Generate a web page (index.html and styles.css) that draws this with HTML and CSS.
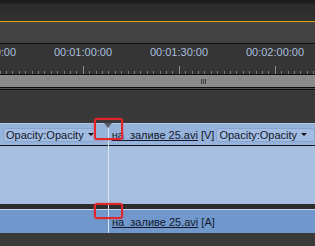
FILE: index.html
```html
<!DOCTYPE html>
<html lang="en">
<head>
    <meta charset="UTF-8">
    <title>Timeline</title>
    <link rel="stylesheet" href="styles.css">
</head>
<body>
    <div class="window">
        <div class="titlebar"></div>
        <div class="work-line"></div>
        <div class="work-area"></div>
        <div class="sep"></div>
        <div class="ruler">
            <div class="mark"><span>00:00:30:00</span><div class="ticks"></div></div>
            <div class="mark"><span>00:01:00:00</span><div class="ticks"></div></div>
            <div class="mark"><span>00:01:30:00</span><div class="ticks"></div></div>
            <div class="mark"><span>00:02:00:00</span><div class="ticks"></div></div>
        </div>
        <div class="sep"></div>
        <div class="zoombar"><div class="grip"><i></i><i></i><i></i></div></div>
        <div class="sep"></div>
        <div class="sep grey"></div>
        <div class="sep"></div>
        <div class="empty"></div>

        <div class="tracks">
            <div class="video-head">
                <div class="fx-box fx-left">Opacity:Opacity <b class="arrow"></b></div>
                <div class="clip-name"><u>на_заливе 25.avi</u> [V]</div>
                <div class="fx-box fx-right">Opacity:Opacity <b class="arrow"></b></div>
            </div>
            <div class="sep"></div>
            <div class="video-body"></div>
            <div class="track-gap"></div>
            <div class="audio">
                <div class="clip-name"><u>на_заливе 25.avi</u> [A]</div>
            </div>

            <div class="playhead"></div>
            <div class="head-mark"></div>
            <div class="highlight hl-video"></div>
            <div class="highlight hl-audio"></div>
        </div>
        <div class="bottom"></div>
    </div>
</body>
</html>
```

FILE: styles.css
```css
body {
    margin: 0;
    background: #3a3a3a;
    font-family: "Liberation Sans", Arial, sans-serif;
    font-size: 11px;
}

.window {
    width: 315px;
    height: 246px;
    overflow: hidden;
    position: relative;
}

.titlebar {
    height: 21px;
    background: linear-gradient(#1d1d1d 0, #1d1d1d 3px, #2b2b2b 4px, #323232 100%);
}

.work-line {
    height: 1px;
    background: #e4a10e;
}

.work-area {
    height: 21px;
    background: #434343;
}

.sep {
    height: 1px;
    background: #0e0e0e;
}

.sep.grey {
    background: #555;
}

.ruler {
    height: 30px;
    background: #353535;
    display: flex;
    margin-left: -61px;
}

.mark {
    width: 96px;
    flex: none;
    display: flex;
    flex-direction: column;
    align-items: center;
}

.mark span {
    height: 20px;
    padding-top: 2px;
    line-height: 13px;
    color: #a9bfdc;
}

.ticks {
    width: 96px;
    height: 8px;
    position: relative;
    background: repeating-linear-gradient(to right, #7c7c7c 0, #7c7c7c 1px, transparent 1px, transparent 6.4px);
    background-size: 96px 3px;
    background-position: 3.2px 100%;
    background-repeat: no-repeat;
}

.ticks::after {
    content: "";
    position: absolute;
    left: 48px;
    bottom: 0;
    width: 1px;
    height: 8px;
    background: #8a8a8a;
}

.zoombar {
    height: 12px;
    background: #8b8b8b;
    display: flex;
    align-items: center;
    padding-left: 201px;
}

.grip {
    display: flex;
    gap: 1px;
}

.grip i {
    width: 1px;
    height: 5px;
    background: #3c3c3c;
}

.empty {
    height: 33px;
    background: #393939;
}

.tracks {
    position: relative;
}

.video-head {
    height: 22px;
    background: #96b3dc;
    border-top: 1px solid #b5c8e6;
    box-sizing: border-box;
    display: flex;
    align-items: center;
    color: #14182a;
}

.fx-box {
    height: 14px;
    line-height: 14px;
    box-sizing: border-box;
    background: #a3bce2;
    border: 1px solid #88a5d0;
    border-radius: 2px;
    padding: 0 0 0 2px;
    display: flex;
    align-items: center;
    gap: 4px;
    white-space: nowrap;
}

.fx-left {
    margin-left: 3px;
    width: 92px;
}

.fx-right {
    margin-left: 2px;
    width: 100px;
}

.arrow {
    width: 0;
    height: 0;
    border-left: 3px solid transparent;
    border-right: 3px solid transparent;
    border-top: 3px solid #111;
}

.clip-name {
    margin-left: 17px;
    white-space: nowrap;
    line-height: 14px;
}

.video-body {
    height: 58px;
    background: #a6bfe1;
}

.track-gap {
    height: 5px;
    background: #2d2d2d;
    border-bottom: 1px solid #c9d5e8;
}

.audio {
    height: 23px;
    background: #7098cd;
    display: flex;
    align-items: flex-end;
    padding-bottom: 4px;
    box-sizing: border-box;
    color: #14182a;
}

.audio .clip-name {
    margin-left: 112px;
}

.playhead {
    position: absolute;
    left: 108px;
    top: 0;
    width: 1px;
    height: 110px;
    background: #dbe4f1;
}

.head-mark {
    position: absolute;
    left: 104px;
    top: 0;
    width: 0;
    height: 0;
    border-left: 4.5px solid transparent;
    border-right: 4.5px solid transparent;
    border-top: 5px solid #5a5d63;
}

.highlight {
    position: absolute;
    left: 94px;
    width: 29px;
    box-sizing: border-box;
    border: 2px solid #e2262a;
    border-radius: 3px;
    box-shadow: 0 0 2px rgba(230, 40, 40, 0.6);
}

.hl-video {
    top: -5px;
    height: 22px;
}

.hl-audio {
    top: 80px;
    height: 16px;
}

.bottom {
    height: 20px;
    background: #3a3a3a;
}
```
